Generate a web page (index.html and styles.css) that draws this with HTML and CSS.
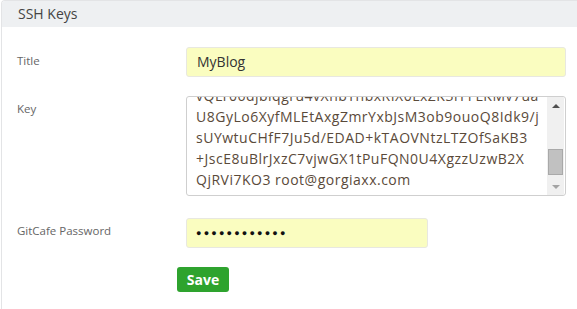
FILE: index.html
```html
<!DOCTYPE html>
<html>
<head>
<meta charset="utf-8">
<link rel="stylesheet" href="styles.css">
</head>
<body>
<div class="panel">
  <div class="panel-head">SSH Keys</div>
  <div class="panel-body">
    <div class="row row-title">
      <div class="label">Title</div>
      <div class="field"><div class="input input-title">MyBlog</div></div>
    </div>
    <div class="row row-key">
      <div class="label">Key</div>
      <div class="field">
        <div class="textarea">
          <div class="ta-content">
            <div class="ta-text">
              <span class="ln">vQLr06djbiqgru4vXnbTnbxRIX0LxZK3rFFLKMv7ua</span>
              <span class="ln">U8GyLo6XyfMLEtAxgZmrYxbJsM3ob9ouoQ8Idk9/j</span>
              <span class="ln">sUYwtuCHfF7Ju5d/EDAD+kTAOVNtzLTZOfSaKB3</span>
              <span class="ln">+JscE8uBlrJxzC7vjwGX1tPuFQN0U4XgzzUzwB2X</span>
              <span class="ln">QjRVi7KO3 root@gorgiaxx.com</span>
            </div>
          </div>
          <div class="scrollbar">
            <div class="arrow up"></div>
            <div class="track"><div class="thumb"></div></div>
            <div class="arrow down"></div>
          </div>
        </div>
      </div>
    </div>
    <div class="row row-pass">
      <div class="label">GitCafe Password</div>
      <div class="field"><div class="input input-pass">●●●●●●●●●●●●</div></div>
    </div>
    <div class="actions">
      <button class="btn-save">Save</button>
    </div>
  </div>
</div>
</body>
</html>
```
FILE: styles.css
```css
html, body {
  margin: 0;
  padding: 0;
  background: #fff;
}
body {
  font-family: "Open Sans", "Noto Sans", sans-serif;
  width: 577px;
  height: 309px;
  overflow: hidden;
}
.panel {
  margin-left: 1px;
  border: 1px solid #e3e4e6;
  border-right: none;
  border-radius: 4px 0 0 0;
  height: 320px;
}
.panel-head {
  background: #eef0f2;
  height: 26px;
  line-height: 26px;
  padding-left: 16px;
  font-size: 14px;
  color: #444;
  border-radius: 3px 0 0 0;
}
.panel-body {
  padding-top: 20px;
}
.row {
  display: flex;
}
.label {
  width: 169px;
  padding-left: 15px;
  font-size: 11.5px;
  color: #666;
  flex-shrink: 0;
}
.row-title .label { padding-top: 6px; }
.row-key { margin-top: 19px; }
.row-key .label { padding-top: 5px; }
.row-pass { margin-top: 22px; }
.row-pass .label { padding-top: 5px; }
.input {
  box-sizing: border-box;
  height: 30px;
  border: 1px solid #e8e8e0;
  border-radius: 3px;
  background: #fafdc0;
  padding-left: 10px;
  line-height: 28px;
  font-size: 14px;
  color: #333;
}
.input-title { width: 380px; }
.input-pass {
  width: 242px;
  padding-left: 9px;
  font-size: 9px;
  letter-spacing: 2.2px;
  color: #111;
}
.textarea {
  box-sizing: border-box;
  width: 380px;
  height: 100px;
  border: 1px solid #cfcfcf;
  border-radius: 3px;
  display: flex;
  overflow: hidden;
  background: #fff;
}
.ta-content {
  flex: 1;
  overflow: hidden;
  padding-left: 9px;
}
.ta-text {
  margin-top: -12px;
  font-size: 14px;
  line-height: 21px;
  letter-spacing: 0.5px;
  color: #5a4a3a;
  white-space: nowrap;
}
.ln { display: block; }
.scrollbar {
  width: 17px;
  background: #f0f0f0;
  display: flex;
  flex-direction: column;
  margin-right: 1px;
}
.arrow {
  height: 17px;
  position: relative;
}
.arrow::after {
  content: "";
  position: absolute;
  left: 5px;
  width: 0;
  height: 0;
  border-left: 4px solid transparent;
  border-right: 4px solid transparent;
}
.arrow.up::after {
  top: 7px;
  border-bottom: 4px solid #505050;
}
.arrow.down::after {
  top: 7px;
  border-top: 4px solid #a3a3a3;
}
.track {
  flex: 1;
  display: flex;
  flex-direction: column;
  justify-content: flex-end;
  padding: 0 1px;
}
.thumb {
  height: 24px;
  background: #c1c1c1;
  border: 1px solid #a9a9a9;
  margin-bottom: 3px;
}
.actions {
  padding-left: 175px;
  margin-top: 19px;
}
.btn-save {
  background: #2ea32e;
  border: none;
  border-radius: 3px;
  color: #fff;
  font-family: "Open Sans", sans-serif;
  font-weight: bold;
  font-size: 14px;
  width: 52px;
  height: 25px;
  padding: 0;
}
```
